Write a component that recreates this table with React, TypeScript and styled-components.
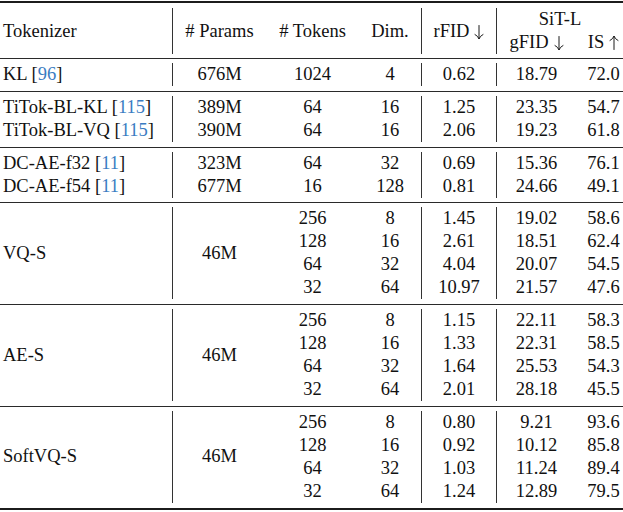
import React from 'react'
import styled, { createGlobalStyle } from 'styled-components'

const GlobalStyle = createGlobalStyle`
  html, body {
    margin: 0;
    padding: 0;
    background: #ffffff;
    overflow: hidden;
  }
`

const Table = styled.div`
  width: 623px;
  display: flex;
  flex-direction: column;
  font-family: 'Liberation Serif', 'Times New Roman', serif;
  font-size: 18.5px;
  color: #111;
`

const TopRule = styled.div`
  margin-top: 1px;
  height: 2px;
  background: #1c1c1c;
`

const BottomRule = styled.div`
  height: 2px;
  background: #1c1c1c;
`

const Grid = styled.div`
  display: grid;
  grid-template-columns: 172px 94px 93px 62px 75px 80px 47px;
  grid-auto-rows: 23px;
`

const Header = styled(Grid)`
  padding: 5px 0 4px;
`

const Section = styled(Grid)`
  border-top: 1px solid #2a2a2a;
  padding: 4px 0 4.75px;
`

const Cell = styled.div<{ $left?: boolean; $divider?: boolean; $rows?: number; $cols?: number; $last?: boolean }>`
  display: flex;
  align-items: center;
  justify-content: ${p => (p.$left ? 'flex-start' : 'center')};
  padding-left: ${p => (p.$left ? '3px' : p.$last ? '8px' : '0')};
  border-left: ${p => (p.$divider ? '1px solid #333' : 'none')};
  grid-row: ${p => (p.$rows ? `span ${p.$rows}` : 'auto')};
  grid-column: ${p => (p.$cols ? `span ${p.$cols}` : 'auto')};
  white-space: nowrap;
  line-height: 23px;
`

const Cite = styled.span`
  color: #3a7cc2;
`

const ArrowSvg = styled.svg`
  width: 10px;
  height: 16px;
  margin-left: 5px;
  margin-top: 1px;
`

function Arrow({ up }: { up?: boolean }) {
  return (
    <ArrowSvg viewBox="0 0 10 16" fill="none" stroke="#1a1a1a" strokeWidth="1" strokeLinecap="round">
      <g transform={up ? 'rotate(180 5 8)' : undefined}>
        <path d="M5 1.5 V14.5" />
        <path d="M1 10.5 Q4 12 5 15 Q6 12 9 10.5" />
      </g>
    </ArrowSvg>
  )
}

type Row = {
  name?: React.ReactNode
  params?: string
  tokens: string
  dim: string
  rfid: string
  gfid: string
  is: string
}

type Group = { merged?: { name: string; params: string }; rows: Row[] }

const groups: Group[] = [
  {
    rows: [
      { name: <>KL [<Cite>96</Cite>]</>, params: '676M', tokens: '1024', dim: '4', rfid: '0.62', gfid: '18.79', is: '72.0' },
    ],
  },
  {
    rows: [
      { name: <>TiTok-BL-KL [<Cite>115</Cite>]</>, params: '389M', tokens: '64', dim: '16', rfid: '1.25', gfid: '23.35', is: '54.7' },
      { name: <>TiTok-BL-VQ [<Cite>115</Cite>]</>, params: '390M', tokens: '64', dim: '16', rfid: '2.06', gfid: '19.23', is: '61.8' },
    ],
  },
  {
    rows: [
      { name: <>DC-AE-f32 [<Cite>11</Cite>]</>, params: '323M', tokens: '64', dim: '32', rfid: '0.69', gfid: '15.36', is: '76.1' },
      { name: <>DC-AE-f54 [<Cite>11</Cite>]</>, params: '677M', tokens: '16', dim: '128', rfid: '0.81', gfid: '24.66', is: '49.1' },
    ],
  },
  {
    merged: { name: 'VQ-S', params: '46M' },
    rows: [
      { tokens: '256', dim: '8', rfid: '1.45', gfid: '19.02', is: '58.6' },
      { tokens: '128', dim: '16', rfid: '2.61', gfid: '18.51', is: '62.4' },
      { tokens: '64', dim: '32', rfid: '4.04', gfid: '20.07', is: '54.5' },
      { tokens: '32', dim: '64', rfid: '10.97', gfid: '21.57', is: '47.6' },
    ],
  },
  {
    merged: { name: 'AE-S', params: '46M' },
    rows: [
      { tokens: '256', dim: '8', rfid: '1.15', gfid: '22.11', is: '58.3' },
      { tokens: '128', dim: '16', rfid: '1.33', gfid: '22.31', is: '58.5' },
      { tokens: '64', dim: '32', rfid: '1.64', gfid: '25.53', is: '54.3' },
      { tokens: '32', dim: '64', rfid: '2.01', gfid: '28.18', is: '45.5' },
    ],
  },
  {
    merged: { name: 'SoftVQ-S', params: '46M' },
    rows: [
      { tokens: '256', dim: '8', rfid: '0.80', gfid: '9.21', is: '93.6' },
      { tokens: '128', dim: '16', rfid: '0.92', gfid: '10.12', is: '85.8' },
      { tokens: '64', dim: '32', rfid: '1.03', gfid: '11.24', is: '89.4' },
      { tokens: '32', dim: '64', rfid: '1.24', gfid: '12.89', is: '79.5' },
    ],
  },
]

function App() {
  return (
    <>
      <GlobalStyle />
      <Table>
        <TopRule />
        <Header>
          <Cell $left $rows={2}>Tokenizer</Cell>
          <Cell $divider $rows={2}># Params</Cell>
          <Cell $rows={2}># Tokens</Cell>
          <Cell $rows={2}>Dim.</Cell>
          <Cell $divider $rows={2}>rFID<Arrow /></Cell>
          <Cell $divider $cols={2}>SiT-L</Cell>
          <Cell $divider>gFID<Arrow /></Cell>
          <Cell $last>IS<Arrow up /></Cell>
        </Header>
        {groups.map((g, i) => (
          <Section key={i}>
            {g.merged && (
              <>
                <Cell $left $rows={g.rows.length}>{g.merged.name}</Cell>
                <Cell $divider $rows={g.rows.length}>{g.merged.params}</Cell>
              </>
            )}
            {g.rows.map((r, j) => (
              <React.Fragment key={j}>
                {!g.merged && (
                  <>
                    <Cell $left>{r.name}</Cell>
                    <Cell $divider>{r.params}</Cell>
                  </>
                )}
                <Cell>{r.tokens}</Cell>
                <Cell>{r.dim}</Cell>
                <Cell $divider>{r.rfid}</Cell>
                <Cell $divider>{r.gfid}</Cell>
                <Cell $last>{r.is}</Cell>
              </React.Fragment>
            ))}
          </Section>
        ))}
        <BottomRule />
      </Table>
    </>
  )
}

export default App
